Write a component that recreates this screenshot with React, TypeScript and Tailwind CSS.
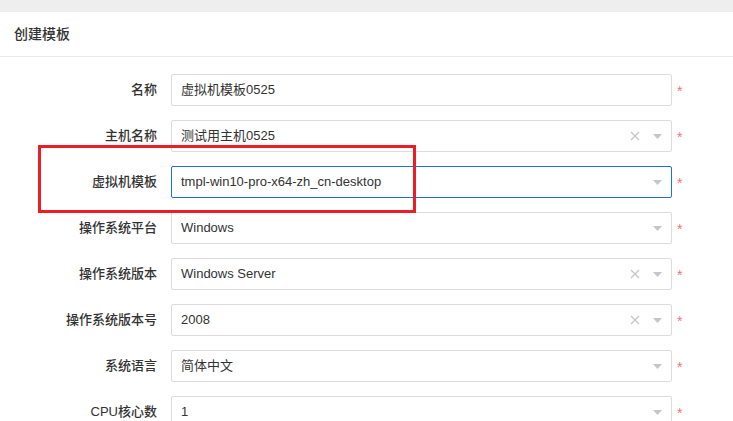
const FONT = "font-['Liberation_Sans','Noto_Sans_CJK_SC',sans-serif]"

type Field = {
  label: string
  value: string
  kind: 'text' | 'select'
  clearable?: boolean
  focused?: boolean
}

const FIELDS: Field[] = [
  { label: '名称', value: '虚拟机模板0525', kind: 'text' },
  { label: '主机名称', value: '测试用主机0525', kind: 'select', clearable: true },
  { label: '虚拟机模板', value: 'tmpl-win10-pro-x64-zh_cn-desktop', kind: 'select', focused: true },
  { label: '操作系统平台', value: 'Windows', kind: 'select' },
  { label: '操作系统版本', value: 'Windows Server', kind: 'select', clearable: true },
  { label: '操作系统版本号', value: '2008', kind: 'select', clearable: true },
  { label: '系统语言', value: '简体中文', kind: 'select' },
  { label: 'CPU核心数', value: '1', kind: 'select' },
]

function ClearIcon() {
  return (
    <svg width="10" height="10" viewBox="0 0 10 10" aria-hidden="true">
      <path d="M1 1 L9 9 M9 1 L1 9" stroke="#c8c8c8" strokeWidth="1.4" fill="none" />
    </svg>
  )
}

function CaretIcon() {
  return (
    <svg width="9" height="5" viewBox="0 0 9 5" aria-hidden="true">
      <path d="M0 0 L9 0 L4.5 5 Z" fill="#c3c6cc" />
    </svg>
  )
}

function FormRow({ field }: { field: Field }) {
  return (
    <div className="flex h-[32px] items-center">
      <label className="w-[157px] shrink-0 text-right text-[13px] font-medium text-[#333]">
        {field.label}
      </label>
      <div
        className={`ml-[14px] flex h-[32px] w-[501px] shrink-0 items-center rounded-[2px] border bg-white pl-[9px] pr-[9px] ${
          field.focused ? 'border-[#1f6fe5]' : 'border-[#dcdcdc]'
        }`}
      >
        <span className="flex-1 truncate text-[13px] text-[#333]">{field.value}</span>
        {field.kind === 'select' ? (
          <div className="flex items-center">
            {field.clearable ? (
              <span className="mr-[13px] flex items-center">
                <ClearIcon />
              </span>
            ) : null}
            <CaretIcon />
          </div>
        ) : null}
      </div>
      <span className="ml-[5px] mt-[2px] text-[14px] leading-none text-[#f4737a]">*</span>
    </div>
  )
}

export default function App() {
  return (
    <div className={`relative h-[421px] w-[733px] overflow-hidden bg-white ${FONT}`}>
      <div className="h-[12px] bg-[#eeeeee]" />
      <div className="flex h-[45px] items-center border-b border-[#e8e8e8] px-[14px]">
        <h3 className="text-[14px] font-medium text-[#333]">创建模板</h3>
      </div>

      <div className="flex flex-col gap-[14px] pt-[17px]">
        {FIELDS.map((field) => (
          <FormRow key={field.label} field={field} />
        ))}
      </div>

      {/* annotation box */}
      <div className="pointer-events-none absolute left-[38px] top-[145px] h-[68px] w-[378px] border-[3px] border-[#ee1c25]" />
    </div>
  )
}
